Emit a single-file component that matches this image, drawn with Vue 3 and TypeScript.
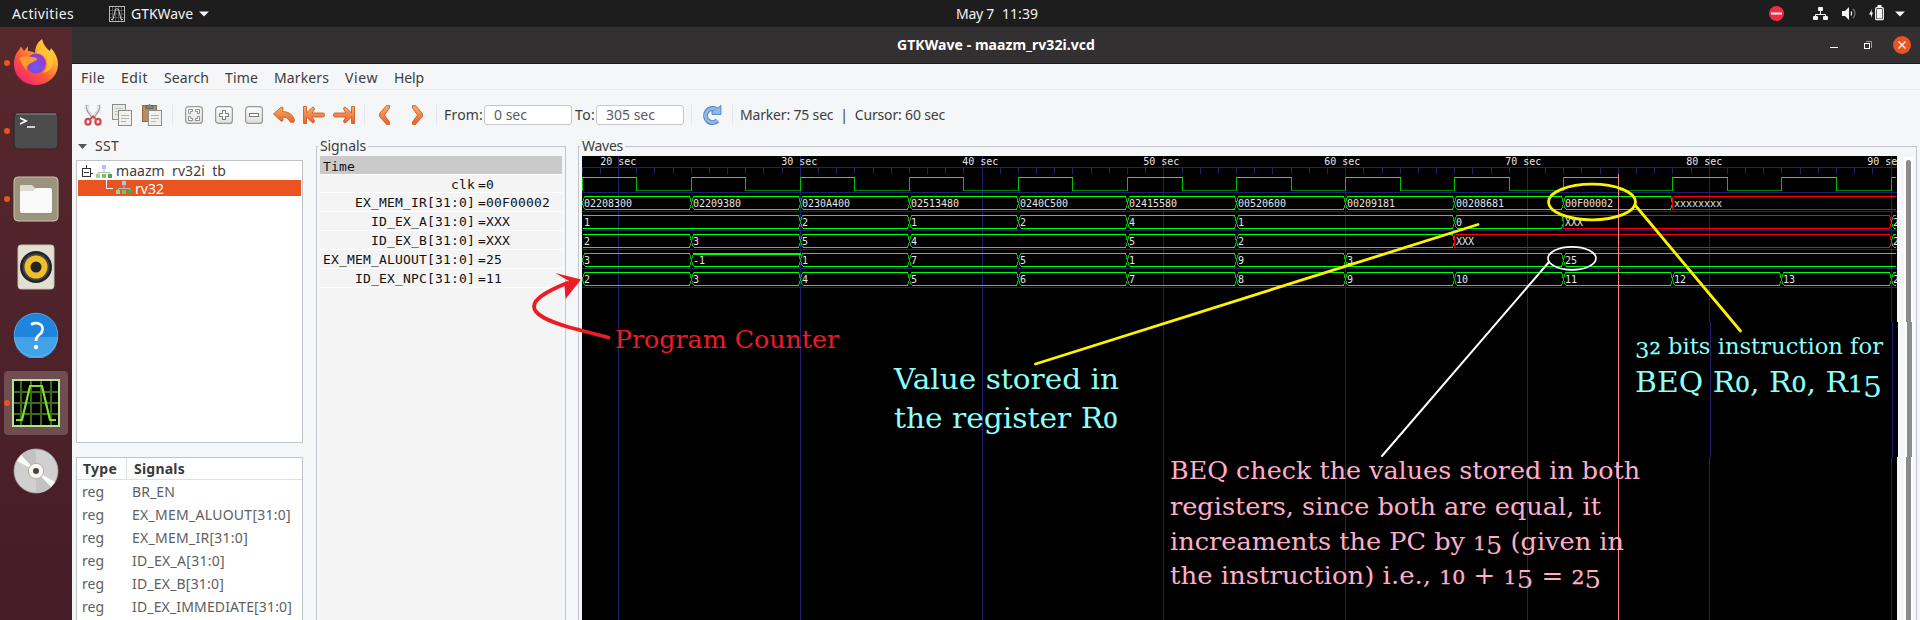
<script setup lang="ts">
import type { Directive } from 'vue'

/* Spreads a label's letters so that it spans the given width. */
const vFit: Directive<HTMLElement, number> = {
  mounted(el, binding) {
    const natural = el.getBoundingClientRect().width
    const count = (el.textContent ?? '').length
    if (count > 0) el.style.letterSpacing = `${(binding.value - natural) / count}px`
  },
}

type Label = { text: string; width: number }

const menus: Label[] = [
  { text: 'File', width: 24 },
  { text: 'Edit', width: 27 },
  { text: 'Search', width: 45 },
  { text: 'Time', width: 33 },
  { text: 'Markers', width: 55 },
  { text: 'View', width: 33 },
  { text: 'Help', width: 30 },
]

const regs: Label[] = [
  { text: 'BR_EN', width: 43 },
  { text: 'EX_MEM_ALUOUT[31:0]', width: 159 },
  { text: 'EX_MEM_IR[31:0]', width: 116 },
  { text: 'ID_EX_A[31:0]', width: 93 },
  { text: 'ID_EX_B[31:0]', width: 92 },
  { text: 'ID_EX_IMMEDIATE[31:0]', width: 160 },
]

type Segment = [start: number, value: string]
type Bus = { name: string; value: string; y: number; open: boolean; segments: Segment[] }

const steps = (from: number, values: string[]): Segment[] =>
  values.map((v, i): Segment => [from + i * 6, v])

const buses: Bus[] = [
  {
    name: 'EX_MEM_IR[31:0]', value: '00F00002', y: 196, open: false,
    segments: steps(18, ['02208300', '02209380', '0230A400', '02513480', '0240C500', '02415580',
      '00520600', '00209181', '00208681', '00F00002', 'xxxxxxxx']),
  },
  {
    name: 'ID_EX_A[31:0]', value: 'XXX', y: 215, open: true,
    segments: [[18, '1'], [30, '2'], [36, '1'], [42, '2'], [48, '4'], [54, '1'], [66, '0'], [72, 'XXX'], [90, '2']],
  },
  {
    name: 'ID_EX_B[31:0]', value: 'XXX', y: 234, open: true,
    segments: [[18, '2'], [24, '3'], [30, '5'], [36, '4'], [48, '5'], [54, '2'], [66, 'XXX'], [90, '2']],
  },
  {
    name: 'EX_MEM_ALUOUT[31:0]', value: '25', y: 253, open: false,
    segments: [[18, '3'], [24, '-1'], [30, '1'], [36, '7'], [42, '5'], [48, '1'], [54, '9'], [60, '3'], [72, '25']],
  },
  {
    name: 'ID_EX_NPC[31:0]', value: '11', y: 272, open: false,
    segments: steps(18, ['2', '3', '4', '5', '6', '7', '8', '9', '10', '11', '12', '13', '2']),
  },
]

const signals = [{ name: 'clk', value: '0' }, ...buses]

const X0 = 582
const Y0 = 156
const at = (t: number) => Math.round(618 + (t - 20) * 18.179) - X0 + 0.5
const END = 1896 - X0

const isX = (v: string) => v.toLowerCase().startsWith('x')

const cells = buses.flatMap((bus) =>
  bus.segments.map(([start, value], i) => {
    const next = bus.segments[i + 1]
    const x = at(start)
    const right = next ? at(next[0]) : END
    const top = bus.y - Y0 + 0.5
    const bottom = top + 13
    const mid = top + 6.5
    const red = isX(value)
    const flat = i === 0 && bus.open
    const left = flat || red ? x : x + 2
    const stop = next ? right - 2 : right
    const rails = `M${left} ${top}H${stop}M${left} ${bottom}H${stop}`
    const leftEdge = flat ? '' : red ? `M${x} ${top}V${bottom}` : `M${x + 2} ${top}L${x} ${mid}L${x + 2} ${bottom}`
    const rightEdge = next ? `M${right - 2} ${top}L${right} ${mid}L${right - 2} ${bottom}` : ''
    return { key: bus.name + start, value, red, rails, edges: leftEdge + rightEdge, tx: x + 1.5, ty: bottom - 2.5 }
  }),
)

const clkHigh: string[] = []
const clkLow: string[] = []
const clkEdge: string[] = []
for (let t = 18; t <= 90; t += 6) {
  const a = at(t)
  const b = Math.min(at(t + 3), END)
  clkHigh.push(`M${a} 21.5H${b}`)
  clkEdge.push(`M${a} 21V35`)
  if (t < 90) {
    clkLow.push(`M${b} 34.5H${at(t + 6)}`)
    clkEdge.push(`M${b} 21V35`)
  }
}

const majors = [20, 30, 40, 50, 60, 70, 80, 90]
const labelX = (t: number) => 18.3 + (t - 20) * 18.1
const gridPath = majors
  .map((t) => (t < 80 ? `M${at(t)} 0V464` : `M${at(t)} 0V166M${at(t) + 1} 166V301M${at(t)} 301V464`))
  .join('')
const ticks = Array.from({ length: 73 }, (_, i) => `M${at(18 + i)} 12V18`).join('')
const rules = [36.5, 55.5, 74.5, 93.5, 112.5, 131.5].map((y) => `M0 ${y}H1315`).join('')

type Glyphs = { text: string; scale: number; dy: number; small: boolean }

/* Old-style figures: 0, 1, 2 sit at x-height, the others hang below the baseline. */
function oldStyle(text: string, size: number): Glyphs[] {
  const out: Glyphs[] = []
  let level = 0
  for (const part of text.match(/[012]+|[3-9]+|[^0-9]+/g) ?? []) {
    const small = /^[012]/.test(part)
    const hanging = /^[3-9]/.test(part)
    const target = hanging ? size * 0.2 : 0
    out.push({ text: part, scale: small ? size * 0.79 : size, dy: target - level, small })
    level = target
  }
  return out
}

const notes = [
  { text: 'Program Counter', x: 615, y: 347.5, width: 224, size: 24, tone: 'red' },
  { text: 'Value stored in', x: 894, y: 389, width: 225, size: 27.5, tone: 'cyan' },
  { text: 'the register R0', x: 894, y: 428, width: 224, size: 27.5, tone: 'cyan' },
  { text: '32 bits instruction for', x: 1635, y: 353.5, width: 248, size: 22, tone: 'cyan' },
  { text: 'BEQ R0, R0, R15', x: 1635, y: 391.5, width: 247, size: 27.5, tone: 'cyan' },
  { text: 'BEQ check the values stored in both', x: 1170, y: 479, width: 470, size: 24.5, tone: 'pink' },
  { text: 'registers, since both are equal, it', x: 1170, y: 514.5, width: 431, size: 24.5, tone: 'pink' },
  { text: 'increaments the PC by 15 (given in', x: 1170, y: 549.5, width: 454, size: 24.5, tone: 'pink' },
  { text: 'the instruction) i.e., 10 + 15 = 25', x: 1170, y: 583.5, width: 431, size: 24.5, tone: 'pink' },
].map((n) => ({ ...n, parts: oldStyle(n.text, n.size) }))
</script>

<template>
  <div class="desktop">
    <svg class="defs" width="0" height="0" aria-hidden="true">
      <defs>
        <linearGradient id="orange" x1="0" y1="0" x2="0" y2="1">
          <stop offset="0" stop-color="#f5b06a" /><stop offset="1" stop-color="#e8622c" />
        </linearGradient>
        <linearGradient id="fox" x1="1" y1="0" x2="0.2" y2="1">
          <stop offset="0" stop-color="#fff44f" /><stop offset=".35" stop-color="#ffb02e" />
          <stop offset=".65" stop-color="#ff5a35" /><stop offset="1" stop-color="#f0207c" />
        </linearGradient>
        <radialGradient id="globe" cx=".5" cy=".65" r=".6">
          <stop offset="0" stop-color="#6a5cf0" /><stop offset="1" stop-color="#9a35d0" />
        </radialGradient>
        <linearGradient id="btn" x1="0" y1="0" x2="0" y2="1">
          <stop offset="0" stop-color="#fff" /><stop offset="1" stop-color="#dededb" />
        </linearGradient>
        <g id="hier">
          <path d="M8 4V8M2 10V7.5H14V10" fill="none" stroke="#b9b9b9" />
          <rect x="6" y="0" width="4" height="4" fill="#a5c8ee" />
          <rect x="0" y="9" width="4" height="4" fill="#9ed49b" />
          <rect x="6" y="9" width="4" height="4" fill="#72c16e" />
          <rect x="12" y="9" width="4" height="4" fill="#4da64a" />
        </g>
      </defs>
    </svg>

    <header class="topbar">
      <span class="activities" v-fit="62">Activities</span>
      <svg class="app-icon" width="16" height="16" viewBox="0 0 16 16">
        <rect x=".5" y=".5" width="15" height="15" fill="#111" stroke="#bbb" />
        <path d="M3.500 1V15M6.500 1V15M9.500 1V15M12.500 1V15M1 4.500H15M1 8H15M1 11.500H15" stroke="#555" />
        <path d="M2 13.500H4L6.500 3H9.500L12 13.500H14" fill="none" stroke="#ccc" />
      </svg>
      <span class="app-name" v-fit="62">GTKWave</span>
      <svg class="app-caret" width="10" height="6" viewBox="0 0 10 6"><path d="M0 .5H10L5 5.500Z" fill="#f2f2f2" /></svg>
      <div class="clock"><span v-fit="38">May 7</span><span v-fit="36">11:39</span></div>
      <div class="tray">
        <svg width="15" height="15" viewBox="0 0 15 15"><circle cx="7.500" cy="7.500" r="7.500" fill="#f22c42" /><rect x="2" y="6.500" width="11" height="2" fill="#fff" /></svg>
        <svg class="net" width="15" height="14" viewBox="0 0 15 14">
          <path d="M7.500 4V8M2.500 10V7.500H12.500V10" fill="none" stroke="#f2f2f2" />
          <rect x="5" y="0" width="5" height="4" rx="1" fill="#f2f2f2" /><rect x="0" y="9" width="5" height="4" rx="1" fill="#f2f2f2" /><rect x="10" y="9" width="5" height="4" rx="1" fill="#f2f2f2" />
        </svg>
        <svg class="vol" width="15" height="14" viewBox="0 0 15 14">
          <path d="M0 4H3L7 0V13L3 9H0Z" fill="#f2f2f2" />
          <path d="M9 4.500Q10.500 6.500 9 8.500" fill="none" stroke="#f2f2f2" stroke-width="1.300" /><path d="M11 2Q15 6.500 11 11" fill="none" stroke="#777" stroke-width="1.200" />
        </svg>
        <svg class="bat" width="16" height="16" viewBox="0 0 16 16">
          <path d="M3 4L0 9.500H2V13L4 7.500H2.500Z" fill="#f2f2f2" />
          <rect x="6.700" y="2.700" width="7.600" height="12" rx="1" fill="none" stroke="#f2f2f2" stroke-width="1.300" />
          <rect x="8.500" y="0" width="4" height="2" fill="#f2f2f2" /><rect x="8" y="4" width="5" height="9.500" fill="#f2f2f2" />
        </svg>
        <svg class="menu-caret" width="10" height="6" viewBox="0 0 10 6"><path d="M0 .5H10L5 5.500Z" fill="#f2f2f2" /></svg>
      </div>
    </header>

    <div class="body">
      <nav class="dock">
        <div class="launcher running">
          <svg class="firefox" width="46" height="48" viewBox="0 0 46 48">
            <path d="M23 47C10 47 1 37.500 1 26C1 20 3 15 6 12L8 8.500L11 13Q13 10 15 8.500V13Q19 13 22 15Q22 6 29 1Q31 9 37 13L38 10Q45 18 45 26C45 38 35 47 23 47Z" fill="url(#fox)" />
            <circle cx="23" cy="25.500" r="10" fill="url(#globe)" />
            <path d="M6 20Q12 17 19 19Q24 19 24 22Q20 24 18 25Q13 27 14 33Q9 27 6 20Z" fill="#ff9a2c" />
            <path d="M22 15Q31 14 34 22Q36 30 30 35Q42 32 40 20Q38 12 29 8Q27 13 22 15Z" fill="#ffc93a" opacity=".75" />
          </svg>
        </div>
        <div class="launcher running">
          <svg width="46" height="38" viewBox="0 0 46 38">
            <rect x="1" y="1" width="44" height="36" rx="4" fill="#4b4b4b" stroke="#2c2324" /><path d="M3 2H43" stroke="#888" />
            <path d="M7 6L13 9L7 12" fill="none" stroke="#fff" stroke-width="1.800" /><path d="M14 15H22" stroke="#fff" stroke-width="1.500" />
          </svg>
        </div>
        <div class="launcher running">
          <svg width="46" height="46" viewBox="0 0 46 46">
            <rect x="1" y="1" width="44" height="44" rx="4" fill="#9b937e" stroke="#cbc5b2" />
            <path d="M7 10Q7 9 8 9H19L22 12V20H7Z" fill="#dfdbd0" /><path d="M7 16Q7 15 9 15H20L23 12H37Q39 12 39 14V35Q39 37 37 37H9Q7 37 7 35Z" fill="#fbfafa" />
          </svg>
        </div>
        <div class="launcher">
          <svg width="38" height="46" viewBox="0 0 38 46">
            <rect x="1" y="1" width="36" height="44" rx="3" fill="#e3dfd3" stroke="#c5bfb0" />
            <circle cx="19" cy="23" r="16" fill="#23242c" /><circle cx="19" cy="23" r="13.500" fill="#444" /><circle cx="19" cy="23" r="11.500" fill="#efc02b" /><circle cx="19" cy="23" r="5.500" fill="#242424" />
          </svg>
        </div>
        <div class="launcher">
          <svg width="46" height="46" viewBox="0 0 46 46">
            <circle cx="23" cy="23" r="22" fill="#1f85dc" /><path d="M1 25A22 22 0 0 0 45 25Z" fill="#41a3e5" /><circle cx="23" cy="23" r="21.800" fill="none" stroke="#7cc0ef" stroke-width=".6" />
            <path d="M18 12.500Q22 10.500 25.500 11.500Q30 13 29.500 17.500Q29 21 26 23Q23 25 23 29" fill="none" stroke="#fff" stroke-width="2.600" /><circle cx="23" cy="35" r="2.200" fill="#fff" />
          </svg>
        </div>
        <div class="launcher running active">
          <svg width="48" height="48" viewBox="0 0 48 48">
            <rect x="1" y="1" width="46" height="46" fill="#000" stroke="#b7e58c" stroke-width="2" />
            <path d="M9 2V46M19 2V46M29 2V46M39 2V46M2 13H46M2 24H46M2 35H46" stroke="#3d6b18" stroke-width="2" />
            <path d="M4 41H10L18 7H30L38 41H44" fill="none" stroke="#84de30" stroke-width="2.200" />
          </svg>
        </div>
        <div class="launcher">
          <svg width="46" height="46" viewBox="0 0 46 46">
            <circle cx="23" cy="23" r="22" fill="#d0d0d0" stroke="#a9a9a9" stroke-width=".8" />
            <path d="M23 23V1A22 22 0 0 0 8 7ZM23 23V45A22 22 0 0 0 38 39Z" fill="#c2c2c2" />
            <path d="M23 23L4 13L8 7ZM23 23L42 34L38 39Z" fill="#fbfbf8" />
            <circle cx="23" cy="23" r="7.700" fill="#f7f6f2" stroke="#b5ad99" /><circle cx="23" cy="23" r="3" fill="#444" />
          </svg>
        </div>
      </nav>

      <main class="window">
        <div class="titlebar">
          <span class="title" v-fit="198">GTKWave - maazm_rv32i.vcd</span>
          <div class="controls">
            <svg width="8" height="18" viewBox="0 0 8 18"><path d="M0 11.500H8" stroke="#fff" /></svg>
            <svg class="restore" width="8" height="18" viewBox="0 0 8 18"><path d="M2 5.500H7.500V12" fill="none" stroke="#999" /><rect x=".5" y="7.500" width="5" height="5" fill="none" stroke="#fff" /></svg>
            <svg class="close" width="18" height="18" viewBox="0 0 18 18"><circle cx="9" cy="9" r="9" fill="#e95420" /><path d="M5.500 5.500L12.500 12.500M12.500 5.500L5.500 12.500" stroke="#fff" stroke-width="1.300" /></svg>
          </div>
        </div>

        <div class="menubar">
          <span v-for="m in menus" :key="m.text" v-fit="m.width">{{ m.text }}</span>
        </div>

        <div class="toolbar">
          <svg class="t-cut" width="18" height="22" viewBox="0 0 18 22">
            <path d="M3 1Q2.500 4 4 7L10 15M15 1Q15.500 4 14 7L8 15" fill="none" stroke="#9a9c98" stroke-width="2.600" /><path d="M3 1.500L4.500 6.500L10 14.500M15 1.500L13.500 6.500L8 14.500" fill="none" stroke="#f0f0ee" stroke-width="1.200" />
            <ellipse cx="4" cy="17.800" rx="2.600" ry="2.900" fill="none" stroke="#cf4b50" stroke-width="2.200" /><ellipse cx="14" cy="17.800" rx="2.600" ry="2.900" fill="none" stroke="#cf4b50" stroke-width="2.200" />
            <path d="M6 15L9 12.500L12 15" fill="none" stroke="#cf4b50" stroke-width="1.800" />
          </svg>
          <svg class="t-copy" width="20" height="22" viewBox="0 0 20 22">
            <rect x=".5" y=".5" width="13" height="15" fill="#e9e9e7" stroke="#8b8d89" /><path d="M3 4.500H11M3 7.500H11M3 10.500H8" stroke="#bdbdbb" />
            <rect x="6.500" y="6.500" width="13" height="15" fill="#f0f0ee" stroke="#8b8d89" /><path d="M9 11.500H17M9 14.500H17M9 17.500H14" stroke="#b5b5b3" />
          </svg>
          <svg class="t-paste" width="20" height="22" viewBox="0 0 20 22">
            <rect x=".5" y="1.500" width="14" height="16" fill="#b98d5b" stroke="#8f6a3c" /><path d="M4 1.500H6Q7.500-.5 9 1.500H11V4.500H4Z" fill="#85857f" stroke="#555" stroke-width=".7" />
            <rect x="6.500" y="6.500" width="13" height="15" fill="#f0f0ee" stroke="#8b8d89" /><path d="M9 11.500H17M9 14.500H17M9 17.500H14" stroke="#b5b5b3" />
          </svg>
          <i class="sep s1"></i>
          <svg class="t-zoom first" width="18" height="18" viewBox="0 0 18 18"><rect x=".6" y=".6" width="16.800" height="16.800" rx="3" fill="url(#btn)" stroke="#989a96" stroke-width="1.200" /><path d="M3.500 7.500V3.500H7.500V5.500H5.500V7.500ZM10.500 3.500H14.500V7.500H12.500V5.500H10.500ZM14.500 10.500V14.500H10.500V12.500H12.500V10.500ZM7.500 14.500H3.500V10.500H5.500V12.500H7.500Z" fill="#fff" stroke="#858585" stroke-width=".9" /></svg>
          <svg class="t-zoom" width="18" height="18" viewBox="0 0 18 18"><rect x=".6" y=".6" width="16.800" height="16.800" rx="3" fill="url(#btn)" stroke="#989a96" stroke-width="1.200" /><path d="M7.500 4.500H10.500V7.500H13.500V10.500H10.500V13.500H7.500V10.500H4.500V7.500H7.500Z" fill="#fff" stroke="#777" /></svg>
          <svg class="t-zoom" width="18" height="18" viewBox="0 0 18 18"><rect x=".6" y=".6" width="16.800" height="16.800" rx="3" fill="url(#btn)" stroke="#989a96" stroke-width="1.200" /><rect x="4.500" y="7.500" width="9" height="3" fill="#fff" stroke="#777" /></svg>
          <svg class="t-undo" width="22" height="18" viewBox="0 0 22 18"><path d="M.5 8L8 1.200Q10.500 .2 10 3L9.500 5.500Q19 5.500 21.500 14Q21.500 17 18.500 16.500Q17 16.500 16 14Q14 11 9.500 11L10 14Q9.500 16 8 15Z" fill="url(#orange)" stroke="#d45a22" stroke-width=".9" /></svg>
          <svg class="t-end" width="22" height="18" viewBox="0 0 22 18"><path d="M.5 .5H3.500V7L9 1.500Q11 0 11.500 3L9 7H20Q21.500 7 21.500 9T20 11H9L11.500 15Q11 18 9 16.500L3.500 11V17.500H.5Z" fill="url(#orange)" stroke="#d45a22" stroke-width=".9" /></svg>
          <svg class="t-end" width="22" height="18" viewBox="0 0 22 18"><path transform="matrix(-1 0 0 1 22 0)" d="M.5 .5H3.500V7L9 1.500Q11 0 11.500 3L9 7H20Q21.500 7 21.500 9T20 11H9L11.500 15Q11 18 9 16.500L3.500 11V17.500H.5Z" fill="url(#orange)" stroke="#d45a22" stroke-width=".9" /></svg>
          <i class="sep s2"></i>
          <svg class="t-prev" width="11" height="20" viewBox="0 0 11 20"><path d="M7.500 .6H10.500V3L5.500 10L10.500 17V19.400H7.500L.6 11.500V8.500Z" fill="url(#orange)" stroke="#d45a22" stroke-width=".9" /></svg>
          <svg class="t-next" width="11" height="20" viewBox="0 0 11 20"><path d="M3.500 .6H.5V3L5.500 10L.5 17V19.400H3.500L10.400 11.500V8.500Z" fill="url(#orange)" stroke="#d45a22" stroke-width=".9" /></svg>
          <i class="sep s3"></i>
          <span class="lbl-from" v-fit="39">From:</span>
          <div class="field"><span v-fit="33">0 sec</span></div>
          <span class="lbl-to" v-fit="20">To:</span>
          <div class="field"><span v-fit="49">305 sec</span></div>
          <i class="sep s4"></i>
          <svg class="t-reload" width="20" height="21" viewBox="0 0 20 21">
            <path d="M15.500 15.500A7 7 0 1 1 14 4.500" fill="none" stroke="#4c83c0" stroke-width="5" /><path d="M18.900 .5V9.500H10V6L13.500 4.500Z" fill="#8db8e4" stroke="#4c83c0" stroke-width=".9" />
            <path d="M15.500 15.500A7 7 0 1 1 14 4.500" fill="none" stroke="#8db8e4" stroke-width="3" />
          </svg>
          <i class="sep s5"></i>
          <span class="status" v-fit="205">Marker: 75 sec&nbsp; |&nbsp; Cursor: 60 sec</span>
        </div>

        <div class="panes">
          <section class="sst">
            <div class="sst-head">
              <svg width="9" height="5" viewBox="0 0 9 5"><path d="M0 0H9L4.500 5Z" fill="#555" /></svg>
              <span v-fit="24">SST</span>
            </div>
            <div class="tree">
              <div class="node">
                <svg class="expander" width="12" height="14" viewBox="0 0 12 14"><rect x=".5" y="4.500" width="8" height="8" fill="#fff" stroke="#333" /><path d="M4.500 1V4M2 8.500H7M9 9.500H11" stroke="#333" /></svg>
                <svg class="hier" width="16" height="13"><use href="#hier" /></svg>
                <span v-fit="110">maazm&nbsp; rv32i&nbsp; tb</span>
              </div>
              <div class="node child">
                <svg class="elbow" width="8" height="16" viewBox="0 0 8 16"><path d="M.5 0V8.500H7" fill="none" stroke="#fff" /></svg>
                <svg class="hier" width="16" height="13"><use href="#hier" /></svg>
                <span v-fit="29">rv32</span>
              </div>
            </div>
            <div class="regs">
              <div class="reg-row head"><div class="type"><b v-fit="34">Type</b></div><div class="sig"><b v-fit="51">Signals</b></div></div>
              <div v-for="r in regs" :key="r.text" class="reg-row">
                <div class="type"><span v-fit="22">reg</span></div>
                <div class="sig"><span v-fit="r.width">{{ r.text }}</span></div>
              </div>
            </div>
          </section>

          <fieldset class="frame signals">
            <legend><span v-fit="46">Signals</span></legend>
            <div class="list">
              <div class="time"><span v-fit="32">Time</span></div>
              <div v-for="s in signals" :key="s.name" class="signal">
                <div class="name"><span v-fit="s.name.length * 8">{{ s.name }}</span></div>
                <span class="value" v-fit="(s.value.length + 1) * 8">={{ s.value }}</span>
              </div>
            </div>
          </fieldset>

          <fieldset class="frame waves">
            <legend><span v-fit="41">Waves</span></legend>
            <div class="wave-body">
              <svg class="canvas" width="1316" height="464" viewBox="0 0 1316 464">
                <path d="M0 0H1315V166H1316V301H1315V464H0Z" fill="#000" />
                <g class="crisp">
                  <path :d="gridPath + ticks + rules + 'M0 11.5H1315'" stroke="#202070" />
                  <path :d="clkLow.join('')" stroke="#008000" />
                  <path :d="clkEdge.join('')" stroke="#00c000" />
                  <path :d="clkHigh.join('')" stroke="#00ff00" />
                  <g v-for="c in cells" :key="c.key" :class="{ unknown: c.red }">
                    <path class="edge" :d="c.edges" />
                    <path class="rail" :d="c.rails" />
                  </g>
                  <path :d="`M${at(24) + 1} 98H${at(30)}`" stroke="#00ff00" stroke-width="2" />
                  <path d="M1036.500 18V464" stroke="#ff8080" />
                </g>
                <svg width="1315" height="464">
                  <text v-for="t in majors" :key="t" class="mono" :x="labelX(t)" y="9" textLength="36">{{ t }} sec</text>
                  <text v-for="c in cells" :key="c.key" class="mono" :x="c.tx" :y="c.ty" :textLength="c.value.length * 6">{{ c.value }}</text>
                </svg>
              </svg>
              <svg class="scroll" width="12" height="464" viewBox="0 0 12 464">
                <path d="M0 1H9V166H10V301H9V464H0V301H1V166H0Z" fill="#fff" />
                <path d="M2 6Q2 4 4.500 4T7 6V166H8V301H7V464H2V301H3V166H2Z" fill="#8c8c8c" />
              </svg>
            </div>
          </fieldset>
        </div>
      </main>
    </div>

    <svg class="overlay" width="1920" height="620" viewBox="0 0 1920 620">
      <g fill="none" stroke-linecap="round">
        <g stroke="#fff200" stroke-width="2.800">
          <ellipse cx="1592" cy="202" rx="43.500" ry="17.800" />
          <path d="M1635 205L1740.500 331M1035.500 364L1478 224.500" />
        </g>
        <g stroke="#fff"><ellipse cx="1572" cy="258.300" rx="24" ry="11.500" stroke-width="1.700" /><path d="M1549 262L1382 456" stroke-width="2" /></g>
        <path d="M608.500 337.500L570 327.500C548 321 534 315 534 306.500C534 298 550 290 567 283" stroke="#ed1c24" stroke-width="3.800" />
      </g>
      <path d="M555.500 273L581 279.500L565.500 299L564.500 285.500L569 281L564.500 278.500Z" fill="#ed1c24" />
      <text v-for="n in notes" :key="n.text" :x="n.x" :y="n.y" :textLength="n.width" lengthAdjust="spacingAndGlyphs" :font-size="n.size" :class="['note', n.tone]"><tspan v-for="(p, i) in n.parts" :key="i" :dy="p.dy" :font-size="p.scale" :class="{ figure: p.small }">{{ p.text }}</tspan></text>
    </svg>
  </div>
</template>

<style>
body { margin: 0; overflow: hidden; }
</style>

<style scoped>
.desktop { position: relative; display: flex; flex-direction: column; width: 1920px; height: 620px; overflow: hidden; font: 14px/18px "Noto Sans", "Open Sans", sans-serif; color: #3d3d3d; white-space: pre; }
.desktop * { box-sizing: border-box; }
.defs { position: absolute; }
svg { display: block; flex: none; }
span, b { flex: none; white-space: pre; }
.topbar { display: flex; align-items: center; height: 27px; flex: none; padding-left: 12px; background: #1d1d1d; color: #f2f2f2; }
.app-icon { margin-left: 35px; }
.app-name { margin-left: 6px; }
.app-caret { margin-left: 6px; }
.clock { display: flex; gap: 8px; margin-left: 747px; }
.tray { display: flex; align-items: center; margin-left: auto; padding-right: 15px; }
.net { margin-left: 29px; }
.vol { margin-left: 14px; }
.bat { margin-left: 12px; margin-top: -2px; }
.menu-caret { margin-left: 10px; }
.body { display: flex; flex: 1; min-height: 0; }
.dock { display: flex; flex-direction: column; align-items: center; gap: 4px; width: 72px; padding-top: 4px; flex: none; background: linear-gradient(#57282c, #451d28); }
.launcher { position: relative; display: flex; align-items: center; justify-content: center; width: 64px; height: 64px; flex: none; border-radius: 4px; }
.launcher.active { background: #704c53; }
.launcher.running::before { content: ""; position: absolute; left: 0; top: 29px; width: 6px; height: 6px; border-radius: 50%; background: #e95420; }
.firefox { margin-top: -2px; }
.window { display: flex; flex-direction: column; width: 1848px; background: #f5f6f8; }
.titlebar { display: flex; align-items: center; height: 37px; flex: none; padding-left: 825px; background: #333031; border-bottom: 1px solid #1b1919; color: #fff; font-weight: 700; }
.controls { display: flex; margin-left: auto; padding-right: 9px; }
.restore { margin-left: 26px; }
.close { margin-left: 21px; }
.menubar { display: flex; align-items: center; gap: 16px; height: 26px; flex: none; padding: 2px 0 0 9px; border-bottom: 1px solid #ebebed; }
.toolbar { display: flex; align-items: center; height: 48px; flex: none; padding: 2px 0 0 12px; }
.sep { width: 1px; height: 20px; background: #e6e7e9; flex: none; }
.t-copy, .t-paste { margin-left: 10px; }
.s1 { margin-left: 10px; }
.t-zoom { margin-left: 12px; }
.t-undo { margin-left: 10px; }
.t-end { margin-left: 8px; }
.s2 { margin-left: 9px; }
.t-prev { margin-left: 14px; }
.t-next { margin-left: 22px; }
.s3 { margin-left: 13px; }
.lbl-from { margin-left: 7px; }
.field { display: flex; align-items: center; width: 88px; height: 20px; margin-left: 1px; padding-left: 9px; border: 1px solid #c4c7d0; border-radius: 3px; background: #fff; color: #5c5c5c; flex: none; }
.lbl-to { margin-left: 3px; }
.s4 { margin-left: 7px; }
.t-reload { margin-left: 10px; margin-top: 1px; }
.s5 { margin-left: 10px; }
.status { margin-left: 7px; }
.panes { display: flex; flex: 1; min-height: 0; }
.sst { width: 244px; flex: none; padding-left: 4px; }
.sst-head { display: flex; align-items: center; gap: 8px; height: 22px; padding: 0 0 6px 2px; }
.tree { width: 227px; height: 283px; border: 1px solid #bfc3cc; background: #fff; padding: 1px; }
.node { display: flex; align-items: center; height: 18px; padding-left: 4px; }
.node .hier { margin-left: 2px; }
.node span { margin-left: 4px; }
.node.child { height: 16px; padding-left: 28px; background: #e95420; color: #fff; }
.node.child .hier { margin-left: 2px; margin-top: -2px; }
.node.child span { margin-left: 3px; margin-top: 1px; }
.regs { width: 227px; height: 200px; margin-top: 14px; border: 1px solid #bfc3cc; background: #fff; color: #606060; }
.reg-row { display: flex; align-items: center; height: 23px; }
.reg-row .type { width: 50px; padding-left: 5px; }
.reg-row .sig { padding-left: 5px; display: flex; align-items: center; }
.reg-row.head { height: 22px; border-bottom: 1px solid #dcdfe3; color: #3a3a3a; align-items: stretch; }
.reg-row.head .type { padding: 2px 0 0 6px; border-right: 1px solid #dcdfe3; }
.reg-row.head .sig { padding-left: 7px; }
.frame { position: relative; margin: 8px 0 0; padding: 0; border: 1px solid #c2c5cd; border-bottom: 0; min-width: 0; flex: none; }
.frame legend { position: absolute; left: 1px; top: -10px; padding: 0 2px; background: #f5f6f8; }
.signals { width: 250px; }
.list { margin: 9px 0 0 3px; width: 242px; height: 470px; background: #f4f4f4; color: #111; font: 13px/18px "DejaVu Sans Mono", monospace; }
.time { height: 19px; background: #cacaca; border-bottom: 1px solid #fff; padding-left: 3px; line-height: 21px; }
.signal { display: flex; height: 19px; border-bottom: 1px solid #fff; line-height: 20px; }
.signal:nth-child(2) { height: 18px; }
.name { display: flex; justify-content: flex-end; width: 155px; }
.value { margin-left: 3px; }
.waves { width: 1339px; margin-left: 12px; }
.wave-body { display: flex; margin: 9px 0 0 3px; }
.scroll { margin-left: 6px; }
.crisp { shape-rendering: crispEdges; fill: none; }
.edge { stroke: #00c000; }
.rail { stroke: #00ff00; }
.unknown .edge, .unknown .rail { stroke: #ff0000; }
.mono { font: 10px "DejaVu Sans Mono", monospace; fill: #e6e6e6; }
.overlay { position: absolute; left: 0; top: 0; pointer-events: none; }
.note { font-family: "DejaVu Serif", serif; white-space: pre; }
.note.red { fill: #ed1c24; }
.note.cyan { fill: #8cfffb; }
.note.pink { fill: #ffaec9; }
.note.cyan .figure { stroke: #8cfffb; stroke-width: .4; }
.note.pink .figure { stroke: #ffaec9; stroke-width: .3; }
</style>
